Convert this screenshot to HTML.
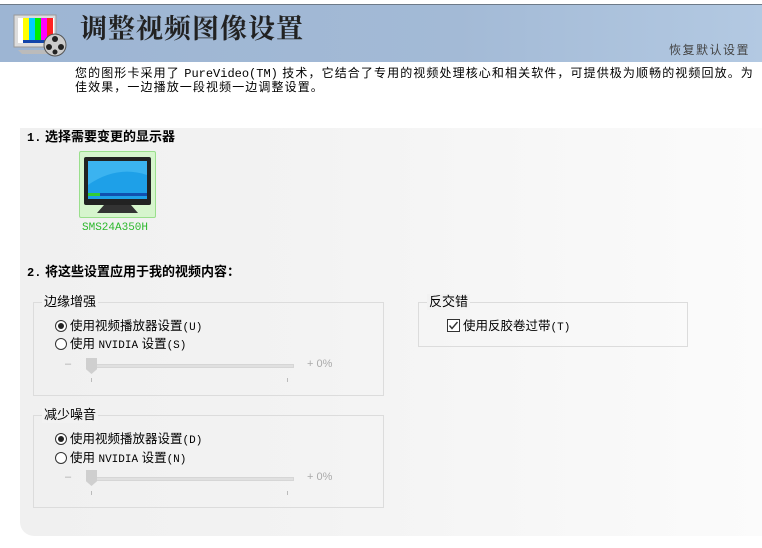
<!DOCTYPE html>
<html><head><meta charset="utf-8"><style>
*{margin:0;padding:0;box-sizing:border-box}
body{width:762px;height:548px;background:#fff;position:relative;overflow:hidden;font-family:"Liberation Sans","Noto Sans CJK SC","WenQuanYi Zen Hei",sans-serif;font-size:12px;color:#000}
.a{position:absolute;white-space:nowrap}
#hdr{position:absolute;left:0;top:4px;width:762px;height:58px;border-top:1px solid #6d7a88;background:linear-gradient(90deg,#9db5d3 0%,#a3bad6 60%,#b3c9e2 100%)}
#panel{position:absolute;left:20px;top:128px;width:742px;height:408px;background:linear-gradient(90deg,#f0f0f0 0%,#f3f3f3 40%,#fbfbfb 100%);border-bottom-left-radius:14px}
.grp{position:absolute;border:1px solid #dcdcdc}
.lg{position:absolute;top:-9px;left:8px;background:#f2f2f2;padding:0 2px;font-size:13px;line-height:16px}
.rad{display:inline-block;width:12px;height:12px;border:1px solid #333;border-radius:50%;vertical-align:-2px;margin-right:3px;position:relative;background:#fff}
.rad.on::after{content:"";position:absolute;left:2px;top:2px;width:6px;height:6px;border-radius:50%;background:#222}
.opt{font-size:12.5px;line-height:18px}
.mono{font-family:"Liberation Mono",monospace;font-size:11px}
.track{position:absolute;height:4px;background:#e0e0e0;border:1px solid #d6d6d6}
.thumb{position:absolute;width:11px;height:16px;background:#cfcfcf;clip-path:polygon(0 0,100% 0,100% 70%,50% 100%,0 70%)}
.tk{position:absolute;width:1px;height:4px;background:#bbb}
.g{color:#aaa;font-size:11px}
</style></head><body>
<div id="hdr"></div>
<svg class="a" style="left:12px;top:12px" width="58" height="46" viewBox="0 0 58 46">
<rect x="2" y="3" width="42" height="32" fill="#dcdcdc" stroke="#999"/>
<rect x="6" y="6" width="36" height="25" fill="#fff"/>
<rect x="11" y="6" width="6" height="22" fill="#ff0"/><rect x="17" y="6" width="6" height="22" fill="#0cf"/><rect x="23" y="6" width="6" height="22" fill="#0e0"/><rect x="29" y="6" width="6" height="22" fill="#f0f"/><rect x="35" y="6" width="6" height="22" fill="#f22"/>
<rect x="11" y="28" width="30" height="3" fill="#14a"/>
<path d="M6 38 L36 38 L40 42 L10 42Z" fill="#bbb"/>
<circle cx="43" cy="33" r="11" fill="#ccc" stroke="#555"/>
<circle cx="43" cy="27" r="3" fill="#222"/><circle cx="37" cy="35" r="3" fill="#222"/><circle cx="49" cy="35" r="3" fill="#222"/><circle cx="43" cy="40" r="2.5" fill="#222"/>
</svg>
<div class="a" style="left:80px;top:11px;font-family:'Noto Serif CJK SC',serif;font-weight:bold;font-size:27px;line-height:32px;color:#222;letter-spacing:1px">调整视频图像设置</div>
<div class="a" style="left:669px;top:41px;font-size:12px;color:#444;letter-spacing:1.5px">恢复默认设置</div>
<div class="a" style="left:75px;top:67px;font-size:12px;line-height:13px;letter-spacing:1.1px">您的图形卡采用了 <span class="mono" style="font-size:12px;letter-spacing:0">PureVideo(TM)</span> 技术，它结合了专用的视频处理核心和相关软件，可提供极为顺畅的视频回放。为<br>佳效果，一边播放一段视频一边调整设置。</div>
<div id="panel"></div>
<div class="a" style="left:27px;top:128px;font-size:13px;font-weight:bold;line-height:18px"><span class="mono" style="font-size:12px">1.</span> 选择需要变更的显示器</div>
<div class="a" style="left:79px;top:151px;width:77px;height:67px;background:#d6f5cd;border:1px solid #9adf8c;border-radius:2px"></div>
<svg class="a" style="left:82px;top:155px" width="71" height="60" viewBox="0 0 71 60">
<rect x="2" y="2" width="67" height="48" rx="2" fill="#222"/>
<rect x="6" y="6" width="59" height="38" fill="#1ea0e8"/>
<path d="M6 6 H65 V20 Q35 10 6 30Z" fill="#4fc0f5" opacity=".6"/>
<rect x="6" y="38" width="59" height="3" fill="#1050b0"/><rect x="6" y="38" width="12" height="3" fill="#3c3"/>
<path d="M22 50 H49 L56 58 H15Z" fill="#333"/>
</svg>
<div class="a mono" style="left:82px;top:222px;color:#2db82d;font-size:11px">SMS24A350H</div>
<div class="a" style="left:27px;top:263px;font-size:13px;font-weight:bold;line-height:18px"><span class="mono" style="font-size:12px">2.</span> 将这些设置应用于我的视频内容：</div>

<div class="grp" style="left:33px;top:302px;width:351px;height:94px"><div class="lg">边缘增强</div></div>
<div class="a opt" style="left:55px;top:317px"><span class="rad on"></span>使用视频播放器设置<span class="mono">(U)</span></div>
<div class="a opt" style="left:55px;top:335px"><span class="rad"></span>使用 <span class="mono">NVIDIA</span> 设置<span class="mono">(S)</span></div>
<div class="a g" style="left:65px;top:358px">–</div>
<div class="track" style="left:92px;top:364px;width:202px"></div>
<div class="thumb" style="left:86px;top:358px"></div>
<div class="tk" style="left:91px;top:378px"></div><div class="tk" style="left:287px;top:378px"></div>
<div class="a g" style="left:307px;top:358px">+ 0%</div>

<div class="grp" style="left:33px;top:415px;width:351px;height:93px"><div class="lg">减少噪音</div></div>
<div class="a opt" style="left:55px;top:430px"><span class="rad on"></span>使用视频播放器设置<span class="mono">(D)</span></div>
<div class="a opt" style="left:55px;top:449px"><span class="rad"></span>使用 <span class="mono">NVIDIA</span> 设置<span class="mono">(N)</span></div>
<div class="a g" style="left:65px;top:471px">–</div>
<div class="track" style="left:92px;top:477px;width:202px"></div>
<div class="thumb" style="left:86px;top:470px"></div>
<div class="tk" style="left:91px;top:491px"></div><div class="tk" style="left:287px;top:491px"></div>
<div class="a g" style="left:307px;top:471px">+ 0%</div>

<div class="grp" style="left:418px;top:302px;width:270px;height:45px"><div class="lg">反交错</div></div>
<div class="a opt" style="left:447px;top:317px"><svg width="13" height="13" style="vertical-align:-2px;margin-right:3px" viewBox="0 0 13 13"><rect x=".5" y=".5" width="12" height="12" fill="#fff" stroke="#333"/><path d="M2.5 6.5 L5 9.5 L10.5 3" fill="none" stroke="#333" stroke-width="1.4"/></svg>使用反胶卷过带<span class="mono">(T)</span></div>
</body></html>
